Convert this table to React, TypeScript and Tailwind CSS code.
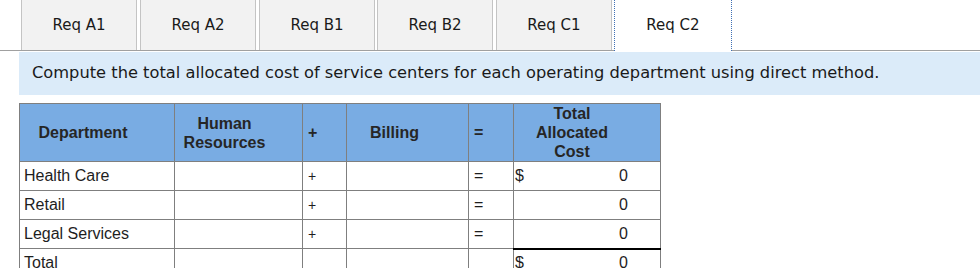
import React from "react"

const tabs = [
  { label: "Req A1", gap: "mr-[3px]" },
  { label: "Req A2", gap: "mr-[3px]" },
  { label: "Req B1", gap: "mr-[2px]" },
  { label: "Req B2", gap: "mr-[3px]" },
  { label: "Req C1", gap: "mr-[2px]" },
]

const rows = [
  { name: "Health Care", dollar: true },
  { name: "Retail", dollar: false },
  { name: "Legal Services", dollar: false },
]

export default function App() {
  const cell = "border border-[#7f7f7f] h-[29px] p-0"
  const th = "border border-[#7f7f7f] font-bold leading-[19px]"
  return (
    <div className="w-[980px] h-[268px] overflow-hidden bg-white">
      {/* Tabs */}
      <div className="flex pl-[21px] h-[51px] border-b border-[#a0a0a0] font-['DejaVu_Sans',sans-serif] text-[15px] text-[#1a1a1a]">
        {tabs.map((t) => (
          <div
            key={t.label}
            className={`w-[116px] ${t.gap} flex items-center justify-center bg-[#f2f2f2] border-x border-[#c4c4c4]`}
          >
            {t.label}
          </div>
        ))}
        <div className="w-[118px] -mb-px flex items-center justify-center bg-white border-x border-dotted border-[#3f70b5]">
          Req C2
        </div>
      </div>

      {/* Instruction banner */}
      <div className="ml-[19px] mt-px h-[43px] bg-[#dbebf9] flex items-center pl-[13px] font-['DejaVu_Sans',sans-serif] text-[16.25px] text-[#1a1a1a]">
        Compute the total allocated cost of service centers for each operating department using direct method.
      </div>

      {/* Table */}
      <table className="ml-[19px] mt-[8px] border-collapse font-['Liberation_Sans',Arial,sans-serif] text-[16px] text-[#1e1e1e]">
        <thead>
          <tr className="bg-[#79ace3] h-[58px] text-[#262626]">
            <th className={`${th} w-[155px] text-center pr-[28px]`}>Department</th>
            <th className={`${th} w-[128px] text-center pr-[28px]`}>Human<br />Resources</th>
            <th className={`${th} w-[44px] text-left pl-[5px]`}>+</th>
            <th className={`${th} w-[122px] text-center pr-[26px]`}>Billing</th>
            <th className={`${th} w-[45px] text-left pl-[5px]`}>=</th>
            <th className={`${th} w-[147px] text-center pr-[30px]`}>Total<br />Allocated<br />Cost</th>
          </tr>
        </thead>
        <tbody>
          {rows.map((r) => (
            <tr key={r.name}>
              <td className={`${cell} pl-[4px]`}>{r.name}</td>
              <td className={cell}></td>
              <td className={`${cell} pl-[5px] text-[14px]`}>+</td>
              <td className={cell}></td>
              <td className={`${cell} pl-[5px]`}>=</td>
              <td className={cell}>
                <div className="flex justify-between pl-[1px] pr-[32px]">
                  <span>{r.dollar ? "$" : ""}</span>
                  <span>0</span>
                </div>
              </td>
            </tr>
          ))}
          <tr>
            <td className={`${cell} pl-[4px]`}>Total</td>
            <td className={cell}></td>
            <td className={cell}></td>
            <td className={cell}></td>
            <td className={cell}></td>
            <td className={`${cell} border-t-2 border-t-black`}>
              <div className="flex justify-between pl-[1px] pr-[32px]">
                <span>$</span>
                <span>0</span>
              </div>
            </td>
          </tr>
        </tbody>
      </table>
    </div>
  )
}
